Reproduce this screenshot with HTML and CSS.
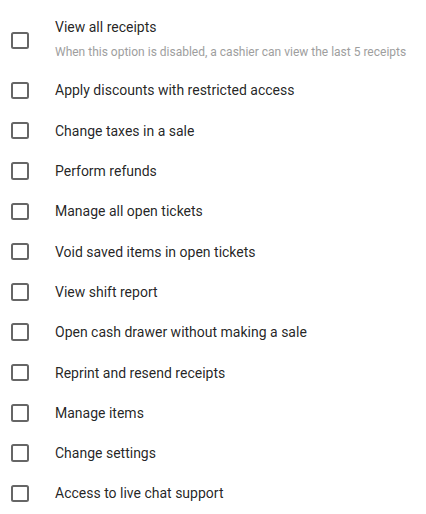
FILE: index.html
```html
<!DOCTYPE html>
<html>
<head>
<meta charset="utf-8">
<link rel="stylesheet" href="styles.css">
</head>
<body>
<ul class="list">
  <li class="row row-two">
    <span class="box"></span>
    <div class="text">
      <div class="title">View all receipts</div>
      <div class="sub">When this option is disabled, a cashier can view the last 5 receipts</div>
    </div>
  </li>
  <li class="row"><span class="box"></span><div class="text"><div class="title">Apply discounts with restricted access</div></div></li>
  <li class="row"><span class="box"></span><div class="text"><div class="title">Change taxes in a sale</div></div></li>
  <li class="row"><span class="box"></span><div class="text"><div class="title">Perform refunds</div></div></li>
  <li class="row"><span class="box"></span><div class="text"><div class="title">Manage all open tickets</div></div></li>
  <li class="row"><span class="box"></span><div class="text"><div class="title">Void saved items in open tickets</div></div></li>
  <li class="row"><span class="box"></span><div class="text"><div class="title">View shift report</div></div></li>
  <li class="row"><span class="box"></span><div class="text"><div class="title">Open cash drawer without making a sale</div></div></li>
  <li class="row"><span class="box"></span><div class="text"><div class="title">Reprint and resend receipts</div></div></li>
  <li class="row"><span class="box"></span><div class="text"><div class="title">Manage items</div></div></li>
  <li class="row"><span class="box"></span><div class="text"><div class="title">Change settings</div></div></li>
  <li class="row"><span class="box"></span><div class="text"><div class="title">Access to live chat support</div></div></li>
</ul>
</body>
</html>
```
FILE: styles.css
```css
* { box-sizing: border-box; }
html, body { margin: 0; padding: 0; background: #fff; }
body { font-family: Roboto, "Noto Sans", sans-serif; }
.list { list-style: none; margin: 0; padding: 0; }
.row {
  display: flex;
  align-items: center;
  height: 40.3px;
  padding-left: 11px;
}
.row-two { height: 70.3px; align-items: flex-start; }
.box {
  flex: none;
  width: 17.5px;
  height: 17.5px;
  border: 2px solid #666;
  border-radius: 2.5px;
  margin-right: 26.5px;
}
.row-two .box { margin-top: 31.5px; }
.row-two .text { padding-top: 17px; }
.text { display: flex; flex-direction: column; }
.title { font-size: 14px; line-height: 20px; color: rgba(0,0,0,0.87); }
.sub { font-size: 12px; line-height: 16px; color: #9e9e9e; margin-top: 7px; }
```
